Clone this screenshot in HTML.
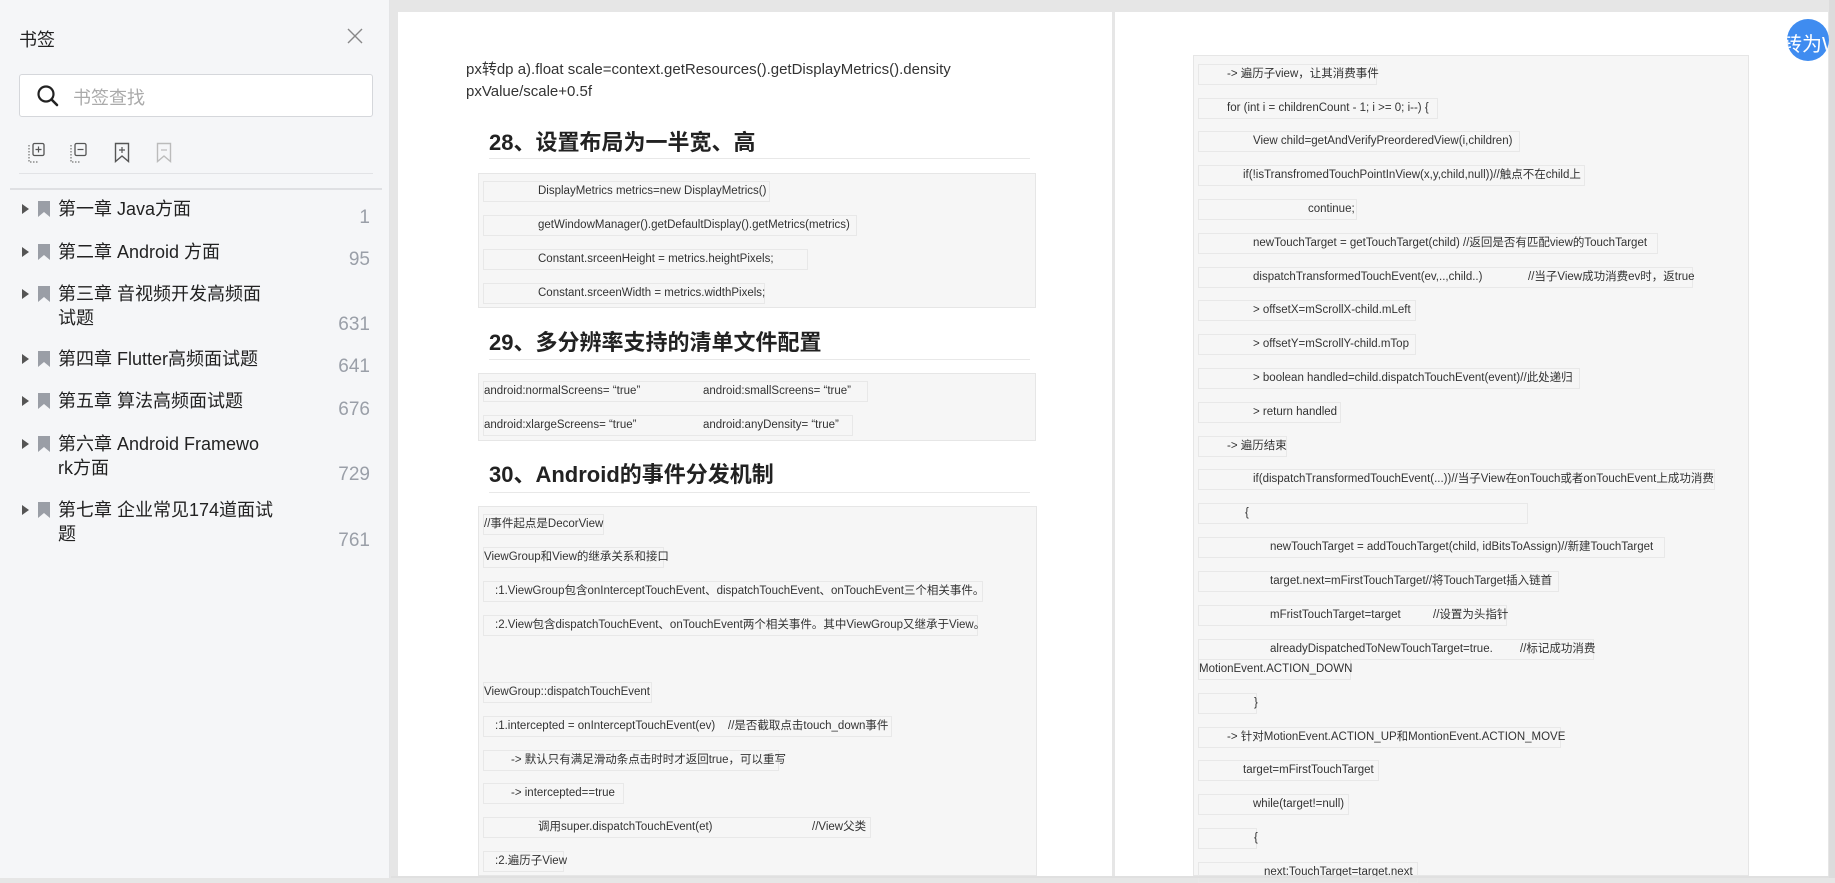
<!DOCTYPE html>
<html><head><meta charset="utf-8">
<style>
*{margin:0;padding:0;box-sizing:border-box}
body{width:1835px;height:878px;overflow:hidden;background:#e6e6e6;font-family:"Liberation Sans","Noto Sans CJK SC",sans-serif;position:relative}
.side{position:absolute;left:0;top:0;width:390px;height:878px;background:#f5f6f8;border-right:1px solid #e3e4e6}
.abs{position:absolute}
.it{position:absolute;left:58px;font-size:18px;color:#222;line-height:24px;width:245px}
.num{position:absolute;right:19px;font-size:19px;color:#9a9fa8;text-align:right;line-height:22px}
.tri{position:absolute;left:22px;width:0;height:0;border-left:7px solid #555;border-top:5px solid transparent;border-bottom:5px solid transparent}
.bm{position:absolute;left:38px;width:12px;height:16px}
.page{position:absolute;top:12px;height:864px;background:#fff}
.p{position:absolute;font-size:15px;color:#333;white-space:nowrap}
.h{position:absolute;font-size:22px;font-weight:bold;color:#222;white-space:nowrap}
.ul{position:absolute;height:1px;background:#e8e8e8}
.box{position:absolute;background:#f6f6f6;border:1px solid #e6e6e6}
.r{position:absolute;height:21px;border:1px solid #e8e8e8;font-size:11.5px;color:#333;line-height:19px;white-space:nowrap}
</style></head><body>
<div class="side">
  <div class="abs" style="left:19px;top:26px;font-size:18px;color:#222">书签</div>
  <svg class="abs" style="left:346px;top:27px" width="18" height="18" viewBox="0 0 18 18"><path d="M2 2L16 16M16 2L2 16" stroke="#888" stroke-width="1.4"/></svg>
  <div class="abs" style="left:19px;top:74px;width:354px;height:43px;background:#fff;border:1px solid #d5d7db;border-radius:3px"></div>
  <svg class="abs" style="left:36px;top:84px" width="24" height="24" viewBox="0 0 24 24"><circle cx="10" cy="10" r="7.5" fill="none" stroke="#222" stroke-width="2.2"/><path d="M15.5 15.5L21 21" stroke="#222" stroke-width="2.6" stroke-linecap="round"/></svg>
  <div class="abs" style="left:73px;top:84px;font-size:18px;color:#aaa">书签查找</div>
  <svg class="abs" style="left:28px;top:142px" width="18" height="21" viewBox="0 0 18 21"><path d="M1 3V20H11" fill="none" stroke="#555" stroke-dasharray="1.5 1.5"/><rect x="5" y="1.5" width="11" height="12" rx="1.5" fill="none" stroke="#555" stroke-width="1.3"/><path d="M10.5 4.5V10.5M7.5 7.5H13.5" stroke="#555" stroke-width="1.2"/></svg>
  <svg class="abs" style="left:70px;top:142px" width="18" height="21" viewBox="0 0 18 21"><path d="M1 3V20H11" fill="none" stroke="#555" stroke-dasharray="1.5 1.5"/><rect x="5" y="1.5" width="11" height="12" rx="1.5" fill="none" stroke="#555" stroke-width="1.3"/><path d="M7.5 7.5H13.5" stroke="#555" stroke-width="1.2"/></svg>
  <svg class="abs" style="left:114px;top:142px" width="16" height="21" viewBox="0 0 16 21"><path d="M1.5 1.5H14.5V19.5L8 14L1.5 19.5Z" fill="none" stroke="#555" stroke-width="1.4"/><path d="M8 5V11M5 8H11" stroke="#555" stroke-width="1.2"/></svg>
  <svg class="abs" style="left:156px;top:142px" width="16" height="21" viewBox="0 0 16 21"><path d="M1.5 1.5H14.5V19.5L8 14L1.5 19.5Z" fill="none" stroke="#bbb" stroke-width="1.4"/><path d="M5 8H11" stroke="#bbb" stroke-width="1.2"/></svg>
  <div class="abs" style="left:19px;top:173px;width:354px;height:1px;background:#e2e3e6"></div>
  <div class="abs" style="left:10px;top:188px;width:372px;height:2px;background:#dfe0e3"></div>

  <div class="tri" style="top:204px"></div><svg class="bm" style="top:201px" viewBox="0 0 12 16"><path d="M0 0H12V16L6 11L0 16Z" fill="#9a9ea6"/></svg>
  <div class="it" style="top:197px">第一章 Java方面</div><div class="num" style="top:207px">1</div>
  <div class="tri" style="top:247px"></div><svg class="bm" style="top:244px" viewBox="0 0 12 16"><path d="M0 0H12V16L6 11L0 16Z" fill="#9a9ea6"/></svg>
  <div class="it" style="top:240px">第二章 Android 方面</div><div class="num" style="top:249px">95</div>
  <div class="tri" style="top:289px"></div><svg class="bm" style="top:286px" viewBox="0 0 12 16"><path d="M0 0H12V16L6 11L0 16Z" fill="#9a9ea6"/></svg>
  <div class="it" style="top:282px">第三章 音视频开发高频面<br>试题</div><div class="num" style="top:314px">631</div>
  <div class="tri" style="top:354px"></div><svg class="bm" style="top:351px" viewBox="0 0 12 16"><path d="M0 0H12V16L6 11L0 16Z" fill="#9a9ea6"/></svg>
  <div class="it" style="top:347px">第四章 Flutter高频面试题</div><div class="num" style="top:356px">641</div>
  <div class="tri" style="top:396px"></div><svg class="bm" style="top:393px" viewBox="0 0 12 16"><path d="M0 0H12V16L6 11L0 16Z" fill="#9a9ea6"/></svg>
  <div class="it" style="top:389px">第五章 算法高频面试题</div><div class="num" style="top:399px">676</div>
  <div class="tri" style="top:439px"></div><svg class="bm" style="top:436px" viewBox="0 0 12 16"><path d="M0 0H12V16L6 11L0 16Z" fill="#9a9ea6"/></svg>
  <div class="it" style="top:432px">第六章 Android Framewo<br>rk方面</div><div class="num" style="top:464px">729</div>
  <div class="tri" style="top:505px"></div><svg class="bm" style="top:502px" viewBox="0 0 12 16"><path d="M0 0H12V16L6 11L0 16Z" fill="#9a9ea6"/></svg>
  <div class="it" style="top:498px">第七章 企业常见174道面试<br>题</div><div class="num" style="top:530px">761</div>
</div>

<div class="page" style="left:398px;width:714px"></div>
<div class="page" style="left:1115px;width:713px"></div>

<div class="p" style="left:466px;top:58px">px转dp a).float scale=context.getResources().getDisplayMetrics().density</div>
<div class="p" style="left:466px;top:83px">pxValue/scale+0.5f</div>
<div class="h" style="left:489px;top:125px">28、设置布局为一半宽、高</div>
<div class="ul" style="left:489px;top:158px;width:541px"></div>
<div class="box" style="left:478px;top:173px;width:558px;height:135px"></div>
<div class="r" style="left:483px;top:181px;width:287px;padding-left:54px">DisplayMetrics metrics=new DisplayMetrics()</div>
<div class="r" style="left:483px;top:215px;width:374px;padding-left:54px">getWindowManager().getDefaultDisplay().getMetrics(metrics)</div>
<div class="r" style="left:483px;top:249px;width:325px;padding-left:54px">Constant.srceenHeight = metrics.heightPixels;</div>
<div class="r" style="left:483px;top:283px;width:282px;padding-left:54px">Constant.srceenWidth = metrics.widthPixels;</div>
<div class="h" style="left:489px;top:325px">29、多分辨率支持的清单文件配置</div>
<div class="ul" style="left:489px;top:359px;width:541px"></div>
<div class="box" style="left:478px;top:373px;width:558px;height:68px"></div>
<div class="r" style="left:483px;top:381px;width:385px">android:normalScreens=&nbsp;“true”<span style="position:absolute;left:219px">android:smallScreens=&nbsp;“true”</span></div>
<div class="r" style="left:483px;top:415px;width:370px">android:xlargeScreens=&nbsp;“true”<span style="position:absolute;left:219px">android:anyDensity=&nbsp;“true”</span></div>
<div class="h" style="left:489px;top:457px">30、Android的事件分发机制</div>
<div class="ul" style="left:489px;top:492px;width:541px"></div>
<div class="box" style="left:478px;top:506px;width:559px;height:370px"></div>
<div class="r" style="left:483px;top:514px;width:121px">//事件起点是DecorView</div>
<div class="r" style="left:483px;top:547px;width:181px">ViewGroup和View的继承关系和接口</div>
<div class="r" style="left:483px;top:581px;width:500px;padding-left:11px">:1.ViewGroup包含onInterceptTouchEvent、dispatchTouchEvent、onTouchEvent三个相关事件。</div>
<div class="r" style="left:483px;top:615px;width:495px;padding-left:11px">:2.View包含dispatchTouchEvent、onTouchEvent两个相关事件。其中ViewGroup又继承于View。</div>
<div class="r" style="left:483px;top:682px;width:169px">ViewGroup::dispatchTouchEvent</div>
<div class="r" style="left:483px;top:716px;width:409px;padding-left:11px">:1.intercepted = onInterceptTouchEvent(ev)&nbsp;&nbsp;&nbsp;&nbsp;//是否截取点击touch_down事件</div>
<div class="r" style="left:483px;top:750px;width:296px;padding-left:27px">-&gt; 默认只有满足滑动条点击时时才返回true，可以重写</div>
<div class="r" style="left:483px;top:783px;width:141px;padding-left:27px">-&gt; intercepted==true</div>
<div class="r" style="left:483px;top:817px;width:388px;padding-left:54px">调用super.dispatchTouchEvent(et)<span style="position:absolute;left:328px">//View父类</span></div>
<div class="r" style="left:483px;top:851px;width:81px;padding-left:11px">:2.遍历子View</div>

<div class="box" style="left:1193px;top:55px;width:556px;height:821px"></div>
<div class="r" style="left:1198px;top:64px;width:179px;padding-left:28px">-&gt; 遍历子view，让其消费事件</div>
<div class="r" style="left:1198px;top:98px;width:240px;padding-left:28px">for (int i = childrenCount - 1; i &gt;= 0; i--) {</div>
<div class="r" style="left:1198px;top:131px;width:322px;padding-left:54px">View child=getAndVerifyPreorderedView(i,children)</div>
<div class="r" style="left:1198px;top:165px;width:387px;padding-left:44px">if(!isTransfromedTouchPointInView(x,y,child,null))//触点不在child上</div>
<div class="r" style="left:1198px;top:199px;width:159px;padding-left:109px">continue;</div>
<div class="r" style="left:1198px;top:233px;width:460px;padding-left:54px">newTouchTarget = getTouchTarget(child) //返回是否有匹配view的TouchTarget</div>
<div class="r" style="left:1198px;top:267px;width:495px;padding-left:54px">dispatchTransformedTouchEvent(ev,..,child..)<span style="position:absolute;left:329px">//当子View成功消费ev时，返true</span></div>
<div class="r" style="left:1198px;top:300px;width:218px;padding-left:54px">&gt; offsetX=mScrollX-child.mLeft</div>
<div class="r" style="left:1198px;top:334px;width:218px;padding-left:54px">&gt; offsetY=mScrollY-child.mTop</div>
<div class="r" style="left:1198px;top:368px;width:382px;padding-left:54px">&gt; boolean handled=child.dispatchTouchEvent(event)//此处递归</div>
<div class="r" style="left:1198px;top:402px;width:143px;padding-left:54px">&gt; return handled</div>
<div class="r" style="left:1198px;top:436px;width:89px;padding-left:28px">-&gt; 遍历结束</div>
<div class="r" style="left:1198px;top:469px;width:517px;padding-left:54px">if(dispatchTransformedTouchEvent(...))//当子View在onTouch或者onTouchEvent上成功消费</div>
<div class="r" style="left:1198px;top:503px;width:330px;padding-left:46px">{</div>
<div class="r" style="left:1198px;top:537px;width:467px;padding-left:71px">newTouchTarget = addTouchTarget(child, idBitsToAssign)//新建TouchTarget</div>
<div class="r" style="left:1198px;top:571px;width:361px;padding-left:71px">target.next=mFirstTouchTarget//将TouchTarget插入链首</div>
<div class="r" style="left:1198px;top:605px;width:309px;padding-left:71px">mFristTouchTarget=target<span style="position:absolute;left:234px">//设置为头指针</span></div>
<div class="r" style="left:1198px;top:639px;width:396px;padding-left:71px">alreadyDispatchedToNewTouchTarget=true.<span style="position:absolute;left:321px">//标记成功消费</span></div>
<div class="r" style="left:1198px;top:659px;width:153px">MotionEvent.ACTION_DOWN</div>
<div class="r" style="left:1198px;top:693px;width:59px;padding-left:55px">}</div>
<div class="r" style="left:1198px;top:727px;width:363px;padding-left:28px">-&gt; 针对MotionEvent.ACTION_UP和MontionEvent.ACTION_MOVE</div>
<div class="r" style="left:1198px;top:760px;width:181px;padding-left:44px">target=mFirstTouchTarget</div>
<div class="r" style="left:1198px;top:794px;width:151px;padding-left:54px">while(target!=null)</div>
<div class="r" style="left:1198px;top:828px;width:59px;padding-left:55px">{</div>
<div class="r" style="left:1198px;top:862px;width:220px;padding-left:65px">next:TouchTarget=target.next</div>

<div class="abs" style="left:391px;top:876px;width:1444px;height:2px;background:#e0e0e0"></div>
<div class="abs" style="left:1787px;top:19px;width:42px;height:42px;overflow:hidden;border-radius:50%;background:#3f8cf0">
  <div style="position:absolute;left:-5px;top:9px;font-size:20px;color:#fff;white-space:nowrap">转为W</div>
</div>
<div class="abs" style="left:1829px;top:0;width:6px;height:878px;background:#dcdcdc"></div>
</body></html>
